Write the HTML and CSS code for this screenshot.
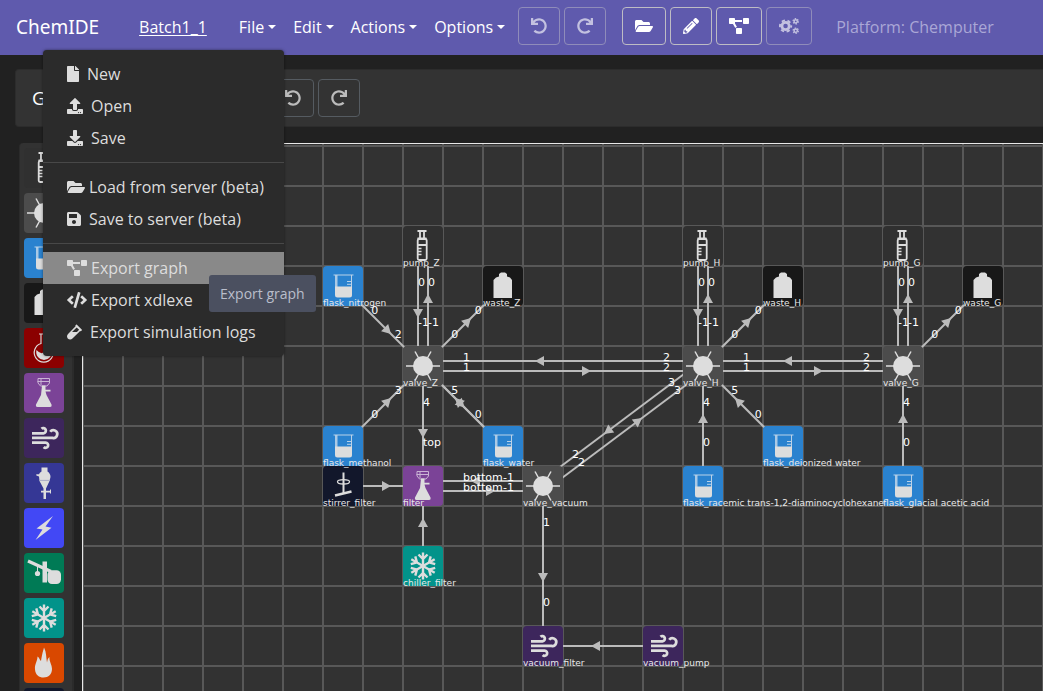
FILE: index.html
```html
<!DOCTYPE html>
<html lang="en">
<head>
<meta charset="utf-8">
<title>ChemIDE</title>
<link rel="stylesheet" href="styles.css">
</head>
<body>
<svg class="sprite" aria-hidden="true">
  <symbol id="i-undo" viewBox="0 0 512 512"><path d="M212.333 224.333H12c-6.627 0-12-5.373-12-12V12C0 5.373 5.373 0 12 0h48c6.627 0 12 5.373 12 12v78.112C117.773 39.279 184.26 7.47 258.175 8.007c136.906.994 246.448 111.623 246.157 248.532C504.041 393.258 393.12 504 256.333 504c-64.089 0-122.496-24.313-166.51-64.215-5.099-4.622-5.334-12.554-.467-17.42l33.967-33.967c4.474-4.474 11.662-4.717 16.401-.525C170.76 415.336 211.58 432 256.333 432c97.268 0 176-78.716 176-176 0-97.267-78.716-176-176-176-58.496 0-110.28 28.476-142.274 72.333h98.274c6.627 0 12 5.373 12 12v48c0 6.627-5.373 12-12 12z"/></symbol>
  <symbol id="i-redo" viewBox="0 0 512 512"><use href="#i-undo" width="512" height="512" transform="matrix(-1 0 0 1 512 0)"/></symbol>
  <symbol id="i-folder" viewBox="0 0 576 512"><path d="M572.694 292.093L500.27 416.248A63.997 63.997 0 0 1 444.989 448H45.025c-18.523 0-30.064-20.093-20.731-36.093l72.424-124.155A64 64 0 0 1 152 256h399.964c18.523 0 30.064 20.093 20.73 36.093zM152 224h328v-48c0-26.51-21.49-48-48-48H272l-64-64H48C21.49 64 0 85.49 0 112v278.046l69.077-118.418C86.214 242.25 117.989 224 152 224z"/></symbol>
  <symbol id="i-pencil" viewBox="0 0 512 512"><path d="M497.9 142.1l-46.1 46.1c-4.7 4.7-12.3 4.7-17 0l-111-111c-4.7-4.7-4.7-12.3 0-17l46.1-46.1c18.7-18.7 49.1-18.7 67.9 0l60.1 60.1c18.8 18.7 18.8 49.1 0 67.9zM284.2 99.8L21.6 362.4.4 483.9c-2.9 16.4 11.4 30.6 27.8 27.8l121.5-21.3 262.6-262.6c4.7-4.7 4.7-12.3 0-17l-111-111c-4.8-4.7-12.4-4.7-17.1 0zM124.1 339.9c-5.5-5.5-5.5-14.3 0-19.8l154-154c5.5-5.5 14.3-5.5 19.8 0s5.5 14.3 0 19.8l-154 154c-5.5 5.5-14.3 5.5-19.8 0zM88 424h48v36.3l-64.5 11.3-31.1-31.1L51.7 376H88v48z"/></symbol>
  <symbol id="i-diagram" viewBox="0 0 640 512"><path d="M384 320H256c-17.67 0-32 14.33-32 32v128c0 17.67 14.33 32 32 32h128c17.67 0 32-14.33 32-32V352c0-17.67-14.33-32-32-32zM192 32c0-17.67-14.33-32-32-32H32C14.33 0 0 14.33 0 32v128c0 17.67 14.33 32 32 32h95.72l73.16 128.04C211.98 300.98 232.4 288 256 288h.28L192 175.51V128h224V64H192V32zM608 0H480c-17.67 0-32 14.33-32 32v128c0 17.67 14.33 32 32 32h128c17.67 0 32-14.33 32-32V32c0-17.67-14.33-32-32-32z"/></symbol>
  <symbol id="i-cogs" viewBox="0 0 640 512"><g fill="none" stroke="currentColor"><circle cx="210" cy="256" r="118" stroke-width="90"/><circle cx="210" cy="256" r="180" stroke-width="62" stroke-dasharray="104 84.5" stroke-dashoffset="52"/><circle cx="535" cy="106" r="52" stroke-width="46"/><circle cx="535" cy="106" r="84" stroke-width="40" stroke-dasharray="48 40"/><circle cx="535" cy="406" r="52" stroke-width="46"/><circle cx="535" cy="406" r="84" stroke-width="40" stroke-dasharray="48 40"/></g></symbol>
  <symbol id="i-file" viewBox="0 0 384 512"><path d="M224 136V0H24C10.7 0 0 10.7 0 24v464c0 13.3 10.7 24 24 24h336c13.3 0 24-10.7 24-24V160H248c-13.2 0-24-10.8-24-24zm160-14.1v6.1H256V0h6.1c6.4 0 12.5 2.5 17 7l97.9 98c4.5 4.5 7 10.6 7 16.9z"/></symbol>
  <symbol id="i-upload" viewBox="0 0 512 512"><path d="M296 384h-80c-13.3 0-24-10.7-24-24V192h-87.7c-17.8 0-26.7-21.5-14.1-34.1L242.3 5.7c7.5-7.5 19.8-7.5 27.3 0l152.2 152.2c12.6 12.6 3.7 34.1-14.1 34.1H320v168c0 13.3-10.7 24-24 24zm216-8v112c0 13.3-10.7 24-24 24H24c-13.3 0-24-10.7-24-24V376c0-13.3 10.7-24 24-24h136v8c0 30.9 25.1 56 56 56h80c30.9 0 56-25.1 56-56v-8h136c13.3 0 24 10.7 24 24zm-124 88c0-11-9-20-20-20s-20 9-20 20 9 20 20 20 20-9 20-20zm64 0c0-11-9-20-20-20s-20 9-20 20 9 20 20 20 20-9 20-20z"/></symbol>
  <symbol id="i-download" viewBox="0 0 512 512"><path d="M216 0h80c13.3 0 24 10.7 24 24v168h87.7c17.8 0 26.7 21.5 14.1 34.1L269.7 378.3c-7.5 7.5-19.8 7.5-27.3 0L90.1 226.1c-12.6-12.6-3.7-34.1 14.1-34.1H192V24c0-13.3 10.7-24 24-24zm296 376v112c0 13.3-10.7 24-24 24H24c-13.3 0-24-10.7-24-24V376c0-13.3 10.7-24 24-24h146.7l49 49c20.1 20.1 52.5 20.1 72.6 0l49-49H488c13.3 0 24 10.7 24 24zm-124 88c0-11-9-20-20-20s-20 9-20 20 9 20 20 20 20-9 20-20zm64 0c0-11-9-20-20-20s-20 9-20 20 9 20 20 20 20-9 20-20z"/></symbol>
  <symbol id="i-save" viewBox="0 0 448 512"><path d="M433.941 129.941l-83.882-83.882A48 48 0 0 0 316.118 32H48C21.49 32 0 53.49 0 80v352c0 26.51 21.49 48 48 48h352c26.51 0 48-21.49 48-48V163.882a48 48 0 0 0-14.059-33.941zM224 416c-35.346 0-64-28.654-64-64 0-35.346 28.654-64 64-64s64 28.654 64 64c0 35.346-28.654 64-64 64zm96-304.52V212c0 6.627-5.373 12-12 12H76c-6.627 0-12-5.373-12-12V108c0-6.627 5.373-12 12-12h228.52c3.183 0 6.235 1.264 8.485 3.515l3.48 3.48A11.996 11.996 0 0 1 320 111.48z"/></symbol>
  <symbol id="i-code" viewBox="0 0 640 512"><path d="M278.9 511.5l-61-17.7c-6.4-1.8-10-8.5-8.2-14.9L346.2 8.7c1.8-6.4 8.5-10 14.9-8.2l61 17.7c6.4 1.8 10 8.5 8.2 14.9L293.8 503.3c-1.9 6.4-8.5 10.1-14.9 8.2zm-114-112.2l43.5-46.4c4.6-4.9 4.3-12.7-.8-17.2L117 256l90.6-79.7c5.1-4.5 5.5-12.3.8-17.2l-43.5-46.4c-4.5-4.8-12.1-5.1-17-.5L3.8 247.2c-5.1 4.7-5.1 12.8 0 17.5l144.1 135.1c4.9 4.6 12.5 4.4 17-.5zm327.2.6l144.1-135.1c5.1-4.7 5.1-12.8 0-17.5L492.1 112.1c-4.8-4.5-12.4-4.3-17 .5L431.6 159c-4.6 4.9-4.3 12.7.8 17.2L523 256l-90.6 79.7c-5.1 4.5-5.5 12.3-.8 17.2l43.5 46.4c4.5 4.9 12.1 5.1 17 .6z"/></symbol>
  <symbol id="i-vial" viewBox="0 0 480 512"><path d="M477.7 186.1L309.5 18.3c-3.1-3.1-8.2-3.1-11.3 0l-34 33.9c-3.1 3.1-3.1 8.2 0 11.3l11.2 11.1L33 316.5c-38.8 38.7-45.1 102-9.4 143.5 20.6 24 49.5 36 78.4 35.9 26.4 0 52.8-10 72.9-30.1l246.3-245.7 11.2 11.1c3.1 3.1 8.2 3.1 11.3 0l34-33.9c3.1-3 3.1-8.1 0-11.2zM318 256H161l148-147.7 78.5 78.3L318 256z"/></symbol>

  <symbol id="n-pump" viewBox="0 0 40 40"><rect width="40" height="40" rx="4" fill="#303030"/><g fill="none" stroke="#ddd" stroke-width="1.8"><path d="M14.500 5H23.500M17 5V12M21 5V12M14.500 12.300H23.500M15 19H24"/><rect x="14.700" y="13" width="9" height="21" rx="1.500"/><path d="M15 22.500H18.500M15 25.500H18.500M15 28.500H18.500" stroke-width="1.300"/></g></symbol>
  <symbol id="n-valve" viewBox="0 0 40 40"><rect width="40" height="40" rx="4" fill="#4c4c4c"/><path d="M3 20H37M12 5.500L28 34.500M28 5.500L12 34.500" stroke="#ddd" stroke-width="1.500"/><circle cx="20" cy="20" r="10" fill="#ddd"/></symbol>
  <symbol id="n-flask" viewBox="0 0 40 40"><rect width="40" height="40" rx="4" fill="#2a82cf"/><path d="M12 9H14.500V21H12Z" fill="#a9c9e6"/><path d="M10.500 9H30.500M28.500 9V21M24 15.500H28M24 18.300H28" stroke="#b9d2e8" fill="none"/><path d="M12 20.500H29V29Q29 31.500 26.500 31.500H14.500Q12 31.500 12 29Z" fill="#ddd"/></symbol>
  <symbol id="n-waste" viewBox="0 0 40 40"><rect width="40" height="40" rx="4" fill="#181818"/><path d="M16 9V8L18 6.500H22L24 8V10.500L27 11.500L29 14V32H10.500V14L13 11.500L16 10.500Z" fill="#ddd"/></symbol>
  <symbol id="n-round" viewBox="0 0 40 40"><rect width="40" height="40" rx="4" fill="#8b0000"/><path d="M15 6H24.500M17 6V15.500A9.500 9.500 0 1 0 22.500 15.500V6" fill="none" stroke="#ddd" stroke-width="1.200"/><path d="M12.500 22Q17 27 20 24T27.500 22A7.800 7.800 0 1 1 12.500 22Z" fill="#ddd"/></symbol>
  <symbol id="n-filter" viewBox="0 0 40 40"><rect width="40" height="40" rx="4" fill="#7b4397"/><path d="M14 5.500H25.500V10L23 13H16.500L14 10ZM13.500 8.500H26M17 6V12" fill="none" stroke="#c9b3d4"/><path d="M18 12.500H21.500V16.700H26.500V18.500H21.500L22.500 22L27.500 31.500Q28 34 26 34H13.500Q11.500 34 12 31.500L17 22Z" fill="#ddd"/></symbol>
  <symbol id="n-vacuum" viewBox="0 0 40 40"><rect width="40" height="40" rx="4" fill="#3d265c"/><path d="M8 15.300H19.500A2.600 2.600 0 1 0 17.500 10.800M8 19.900H28.500A3.900 3.900 0 1 0 26.200 13.800M8 24.600H21.500A2.600 2.600 0 1 1 19.700 29" fill="none" stroke="#ddd" stroke-width="2.700"/></symbol>
  <symbol id="n-sep" viewBox="0 0 40 40"><rect width="40" height="40" rx="4" fill="#353795"/><path d="M17.500 4.500H23.500V8.500Q26.500 10.500 26.500 14L25.500 18L22 25.500V27.800H26V26.500H27V30.500H26V29.500H22V36H19.500V29.500H17V27.800H19.500V25.500L15.500 18L15 13.500L12.300 12.600V11.200H15Q15.500 9.500 17.500 8.500Z" fill="#ddd"/><path d="M15.500 17.400H26" stroke="#a9aac5"/></symbol>
  <symbol id="n-bolt" viewBox="0 0 40 40"><rect width="40" height="40" rx="4" fill="#4248f5"/><path d="M29 8L12.500 20.500L18.500 21.500L11.500 32L27.500 19.700L21.500 18.500Z" fill="#ddd"/></symbol>
  <symbol id="n-rotavap" viewBox="0 0 40 40"><rect width="40" height="40" rx="4" fill="#007a55"/><path d="M4 8L27 18.500" stroke="#ddd" stroke-width="3.200"/><path d="M13.500 13V19" stroke="#ddd"/><circle cx="13.500" cy="20.500" r="2.600" fill="#ddd"/><path d="M18.500 8.500H23V29.500H18.500Z" fill="#ddd"/><rect x="23.500" y="17.300" width="13.500" height="13.700" rx="4.500" fill="#ddd"/></symbol>
  <symbol id="n-chiller" viewBox="0 0 40 40"><rect width="40" height="40" rx="4" fill="#02938a"/><g fill="none" stroke="#ddd" stroke-width="2.400"><g id="arm"><path d="M20 20V6.500M15.500 8.500L20 13L24.500 8.500"/></g><use href="#arm" transform="rotate(60 20 20)"/><use href="#arm" transform="rotate(120 20 20)"/><use href="#arm" transform="rotate(180 20 20)"/><use href="#arm" transform="rotate(240 20 20)"/><use href="#arm" transform="rotate(300 20 20)"/></g></symbol>
  <symbol id="n-heater" viewBox="0 0 40 40"><rect width="40" height="40" rx="4" fill="#d94800"/><path d="M20 4.500C18.500 10 18 12 17 18C15.500 17 15.500 14.500 13.500 13.500C13.500 18 10.500 21 11 26.500C11.500 32 15 34.500 19.500 34.500C24.500 34.500 28 31 28 26C28 21.500 25 18.500 25.500 14C23.500 15.500 23.500 17.500 23 19.500C22 14 22.500 9 20 4.500Z" fill="#ddd"/></symbol>
  <symbol id="n-stirrer" viewBox="0 0 40 40"><rect width="40" height="40" rx="4" fill="#12172b"/><g fill="none" stroke="#ddd"><path d="M20.500 6.500V28" stroke-width="2"/><ellipse cx="20.500" cy="15.800" rx="6" ry="2.200" stroke-width="1.300"/><path d="M12 29.500L28.500 25.500" stroke-width="2.500"/></g></symbol>
</svg>

<header class="navbar">
  <a class="brand" href="#">ChemIDE</a>
  <a class="project" href="#">Batch1_1</a>
  <nav class="menus">
    <button class="menu" aria-expanded="true" aria-controls="file-menu">File</button>
    <button class="menu">Edit</button>
    <button class="menu">Actions</button>
    <button class="menu">Options</button>
  </nav>
  <div class="btn-row">
    <button class="btn" aria-label="Undo" disabled><svg class="ic w16"><use href="#i-undo"/></svg></button>
    <button class="btn" aria-label="Redo" disabled><svg class="ic w16"><use href="#i-redo"/></svg></button>
  </div>
  <div class="btn-row">
    <button class="btn" aria-label="Open"><svg class="ic w18"><use href="#i-folder"/></svg></button>
    <button class="btn" aria-label="Edit"><svg class="ic w16"><use href="#i-pencil"/></svg></button>
    <button class="btn" aria-label="Graph"><svg class="ic w20"><use href="#i-diagram"/></svg></button>
    <button class="btn" aria-label="Simulate" disabled><svg class="ic w20"><use href="#i-cogs"/></svg></button>
  </div>
  <span class="platform">Platform: Chemputer</span>

  <div class="dropdown" id="file-menu">
    <button class="item"><svg class="ic w12 wide"><use href="#i-file"/></svg>New</button>
    <button class="item"><svg class="ic w16 wide"><use href="#i-upload"/></svg>Open</button>
    <button class="item"><svg class="ic w16 wide"><use href="#i-download"/></svg>Save</button>
    <hr class="divider">
    <button class="item"><svg class="ic w18"><use href="#i-folder"/></svg>Load from server (beta)</button>
    <button class="item"><svg class="ic w14 wide"><use href="#i-save"/></svg>Save to server (beta)</button>
    <hr class="divider">
    <button class="item active"><svg class="ic w20"><use href="#i-diagram"/></svg>Export graph<span class="tooltip" role="tooltip">Export graph</span></button>
    <button class="item"><svg class="ic w20"><use href="#i-code"/></svg>Export xdlexe</button>
    <button class="item"><svg class="ic w15 wide"><use href="#i-vial"/></svg>Export simulation logs</button>
  </div>
</header>

<main class="main">
  <section class="toolbar">
    <h1 class="title">Graph</h1>
    <div class="btn-row">
      <button class="btn dark" aria-label="Undo graph change"><svg class="ic w16"><use href="#i-undo"/></svg></button>
      <button class="btn dark" aria-label="Redo graph change"><svg class="ic w16"><use href="#i-redo"/></svg></button>
    </div>
  </section>
  <section class="workspace">
    <aside class="palette" id="palette"></aside>
    <div class="canvas"><svg class="graph" id="graph" role="img" aria-label="Platform graph"></svg></div>
  </section>
</main>
<script src="app.js"></script>
</body>
</html>
```

FILE: styles.css
```css
* {
  box-sizing: border-box;
}

body {
  margin: 0;
  height: 100vh;
  overflow: hidden;
  display: flex;
  flex-direction: column;
  background: #212121;
  color: #ddd;
  font: 16px/24px "Open Sans", "Noto Sans", sans-serif;
}

button {
  font: inherit;
  color: inherit;
  background: none;
  border: 0;
  padding: 0;
  margin: 0;
  cursor: pointer;
}

.sprite {
  position: absolute;
  width: 0;
  height: 0;
}

.ic {
  display: block;
  flex: none;
  height: 16px;
  fill: currentColor;
}

.w12 { width: 12px; }
.w14 { width: 14px; }
.w15 { width: 15px; }
.w16 { width: 16px; }
.w18 { width: 18px; }
.w20 { width: 20px; }

.navbar {
  position: relative;
  z-index: 2;
  flex: none;
  display: flex;
  align-items: center;
  height: 55px;
  padding: 0 16px 3px;
  background: #5f5aad;
  color: #fff;
}

.brand,
.project,
.menu,
.platform {
  padding-top: 2px;
}

.brand {
  color: #fff;
  font-family: "Noto Sans", sans-serif;
  font-size: 19px;
  text-decoration: none;
  margin-right: 40px;
}

.project {
  color: #fff;
  margin-right: 32px;
  text-underline-offset: 2px;
}

.menus {
  display: flex;
  gap: 17px;
  margin-right: 13px;
}

.menu {
  display: flex;
  align-items: center;
  gap: 4px;
}

.menu::after {
  content: "";
  border: 4px solid transparent;
  border-top-color: currentColor;
  border-bottom: 0;
}

.btn-row {
  display: flex;
  gap: 4px;
  margin-right: 16px;
}

.btn {
  display: flex;
  align-items: center;
  height: 38px;
  padding: 0 12px;
  border: 1px solid #bdbcc4;
  border-radius: 4px;
  color: #fff;
}

.btn:disabled {
  border-color: #8f8cba;
  color: #c3c1e0;
}

.btn.dark {
  border-color: #555b61;
  color: #bbb;
}

.platform {
  margin-left: 8px;
  color: #aaa7d6;
  white-space: nowrap;
}

.dropdown {
  position: absolute;
  left: 43px;
  top: 50px;
  width: 241px;
  padding: 8px 0;
  background: #2b2b2b;
  border-radius: 4px;
  box-shadow: 0 0 3px rgba(0, 0, 0, 0.5);
  color: #ddd;
}

.item {
  position: relative;
  display: flex;
  align-items: center;
  gap: 4px;
  width: 100%;
  height: 32px;
  padding: 0 24px;
  white-space: nowrap;
}

.item .wide {
  margin-right: 4px;
}

.item.active {
  z-index: 1;
  background: #898989;
}

.divider {
  height: 1px;
  margin: 8px 0;
  border: 0;
  background: #484848;
}

.tooltip {
  position: absolute;
  left: 166px;
  top: 23px;
  padding: 8px 11px;
  border-radius: 3px;
  background: #4b5060;
  color: #b9becb;
  font-size: 14px;
  line-height: 21px;
}

.main {
  flex: 1;
  min-height: 0;
  display: flex;
  flex-direction: column;
  gap: 16px;
  padding: 14px 0 0 15px;
}

.toolbar {
  flex: none;
  display: flex;
  align-items: center;
  height: 58px;
  padding: 0 16px;
  background: #333;
  border: 1px solid #2c2c2c;
  border-right: 0;
  border-radius: 4px 0 0 4px;
}

.title {
  width: 240px;
  margin: 0;
  font-size: 19px;
  font-weight: 400;
  color: #fff;
}

.workspace {
  flex: 1;
  min-height: 0;
  display: flex;
  gap: 8px;
  padding-left: 4px;
}

.palette {
  flex: none;
  width: 55px;
  padding: 5px 4px;
  display: flex;
  flex-direction: column;
  align-items: flex-start;
  gap: 5px;
  overflow: hidden;
  background: #323232;
  border-right: 2px solid #2b2b2b;
  border-left: 1px solid #2b2b2b;
  border-radius: 4px 4px 0 0;
}

.tile {
  flex: none;
  width: 40px;
  height: 40px;
}

.tile svg {
  display: block;
  width: 40px;
  height: 40px;
}

.canvas {
  flex: 1;
  min-width: 0;
  background: #323232;
  border: solid #e8e8e8;
  border-width: 1px 0 0 1px;
}

.graph {
  display: block;
  width: 100%;
  height: 100%;
}

.grid {
  stroke: #585858;
  stroke-width: 2;
}

.edge {
  stroke: #bbb;
  stroke-width: 2;
}

.arrow {
  fill: #bbb;
}

.port,
.name {
  font-family: "DejaVu Sans", sans-serif;
  fill: #fff;
}

.port {
  font-size: 11px;
}

.name {
  font-size: 9px;
  fill: #e8e8e8;
}
```

FILE: app.js
```js
const NS = "http://www.w3.org/2000/svg";

function el(parent, tag, attrs, text) {
  const node = document.createElementNS(NS, tag);
  for (const key in attrs) node.setAttribute(key, attrs[key]);
  if (text) node.textContent = text;
  parent.appendChild(node);
  return node;
}

const kinds = ["pump", "valve", "flask", "waste", "round", "filter", "vacuum",
  "sep", "bolt", "rotavap", "chiller", "heater", "stirrer"];
const palette = document.getElementById("palette");
for (const kind of kinds) {
  const tile = document.createElement("button");
  tile.className = "tile";
  tile.setAttribute("aria-label", "Add " + kind);
  el(el(tile, "svg", {}), "use", { href: "#n-" + kind });
  palette.appendChild(tile);
}

// Node positions in grid cells.
const CELL = 40;
const nodes = {
  flask_nitrogen: ["flask", 6, 3],
  pump_Z: ["pump", 8, 2],
  waste_Z: ["waste", 10, 3],
  pump_H: ["pump", 15, 2],
  waste_H: ["waste", 17, 3],
  pump_G: ["pump", 20, 2],
  waste_G: ["waste", 22, 3],
  valve_Z: ["valve", 8, 5],
  valve_H: ["valve", 15, 5],
  valve_G: ["valve", 20, 5],
  flask_methanol: ["flask", 6, 7],
  flask_water: ["flask", 10, 7],
  "flask_deionized water": ["flask", 17, 7],
  stirrer_filter: ["stirrer", 6, 8],
  filter: ["filter", 8, 8],
  valve_vacuum: ["valve", 11, 8],
  "flask_racemic trans-1,2-diaminocyclohexane": ["flask", 15, 8],
  "flask_glacial acetic acid": ["flask", 20, 8],
  chiller_filter: ["chiller", 8, 10],
  vacuum_filter: ["vacuum", 11, 12],
  vacuum_pump: ["vacuum", 14, 12]
};

// [source, target, source port, target port, sideways shift, arrow position]
const edges = [
  ["pump_Z", "valve_Z", "0", "-1", 5], ["valve_Z", "pump_Z", "-1", "0", 5],
  ["pump_H", "valve_H", "0", "-1", 5], ["valve_H", "pump_H", "-1", "0", 5],
  ["pump_G", "valve_G", "0", "-1", 5], ["valve_G", "pump_G", "-1", "0", 5],
  ["flask_nitrogen", "valve_Z", "0", "2", 0],
  ["valve_Z", "waste_Z", "0", "0", 0],
  ["valve_H", "waste_H", "0", "0", 0],
  ["valve_G", "waste_G", "0", "0", 0],
  ["valve_H", "valve_Z", "2", "1", 5], ["valve_Z", "valve_H", "1", "2", 5],
  ["valve_G", "valve_H", "2", "1", 5], ["valve_H", "valve_G", "1", "2", 5],
  ["flask_methanol", "valve_Z", "0", "3", 0],
  ["flask_water", "valve_Z", "0", "5", 0],
  ["valve_Z", "flask_water", "", "", 0, 0.52],
  ["valve_Z", "filter", "4", "top", 0],
  ["valve_H", "valve_vacuum", "3", "2", 5], ["valve_vacuum", "valve_H", "2", "3", 5],
  ["valve_vacuum", "filter", "-1", "bottom", 5], ["filter", "valve_vacuum", "bottom", "-1", 5],
  ["flask_deionized water", "valve_H", "0", "5", 0],
  ["flask_racemic trans-1,2-diaminocyclohexane", "valve_H", "0", "4", 0],
  ["flask_glacial acetic acid", "valve_G", "0", "4", 0],
  ["stirrer_filter", "filter", "", "", 0],
  ["chiller_filter", "filter", "", "", 0],
  ["valve_vacuum", "vacuum_filter", "1", "0", 0],
  ["vacuum_pump", "vacuum_filter", "", "", 0]
];

const graph = document.getElementById("graph");
const sheet = el(graph, "g", { transform: "translate(0 2)" });

for (let i = 0; i < 80; i++) {
  const p = i * CELL;
  el(sheet, "line", { class: "grid", x1: p, y1: -2, x2: p, y2: 3200 });
  el(sheet, "line", { class: "grid", x1: 0, y1: p, x2: 3200, y2: p });
}

const center = id => [nodes[id][1] * CELL + 20, nodes[id][2] * CELL + 20];
const labels = [];

for (const [from, to, a, b, shift, at = 0.6] of edges) {
  let [x1, y1] = center(from);
  let [x2, y2] = center(to);
  const len = Math.hypot(x2 - x1, y2 - y1);
  const ux = (x2 - x1) / len;
  const uy = (y2 - y1) / len;
  x1 -= uy * shift; x2 -= uy * shift;
  y1 += ux * shift; y2 += ux * shift;
  el(sheet, "line", { class: "edge", x1, y1, x2, y2 });
  const tx = x1 + ux * len * at;
  const ty = y1 + uy * len * at;
  const bx = tx - ux * 9;
  const by = ty - uy * 9;
  el(sheet, "polygon", {
    class: "arrow",
    points: `${tx},${ty} ${bx - uy * 5},${by + ux * 5} ${bx + uy * 5},${by - ux * 5}`
  });
  if (a) labels.push([x1 + ux * CELL, y1 + uy * CELL, a]);
  if (b) labels.push([x2 - ux * CELL, y2 - uy * CELL, b]);
}

for (const id in nodes) {
  const [kind, col, row] = nodes[id];
  el(sheet, "use", { href: "#n-" + kind, x: col * CELL, y: row * CELL, width: CELL, height: CELL });
}
for (const id in nodes) {
  const [, col, row] = nodes[id];
  el(sheet, "text", { class: "name", x: col * CELL, y: row * CELL + CELL }, id);
}
for (const [x, y, text] of labels) {
  el(sheet, "text", { class: "port", x, y }, text);
}
```
